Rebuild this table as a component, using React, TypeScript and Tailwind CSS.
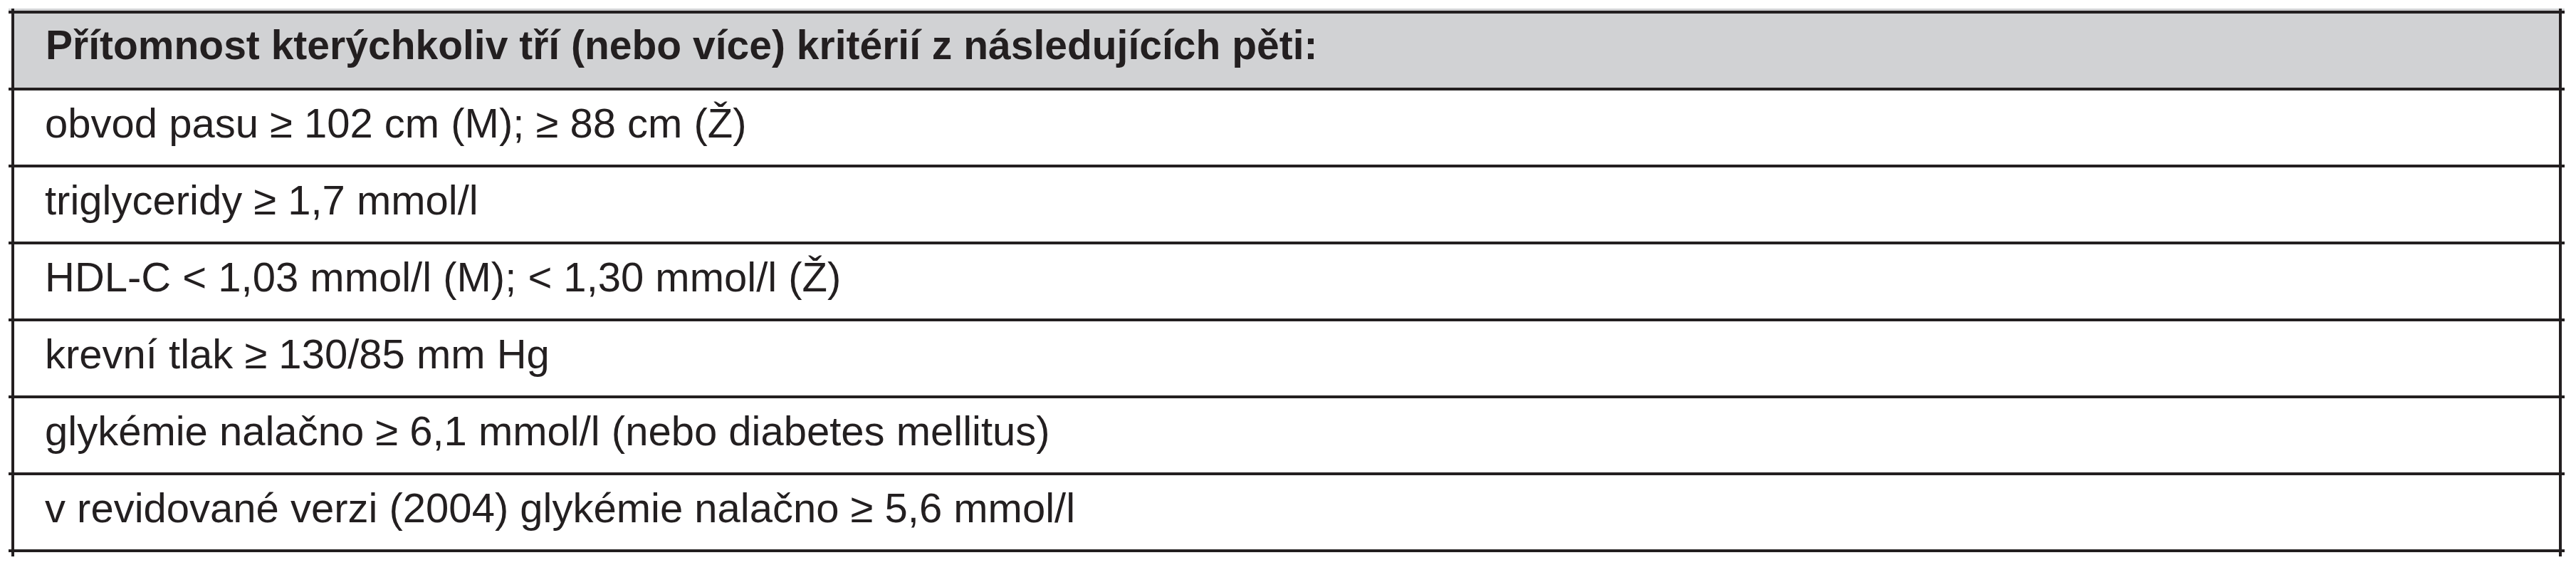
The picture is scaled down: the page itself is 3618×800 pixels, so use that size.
const criteria = [
  'obvod pasu ≥ 102 cm (M); ≥ 88 cm (Ž)',
  'triglyceridy ≥ 1,7 mmol/l',
  'HDL-C < 1,03 mmol/l (M); < 1,30 mmol/l (Ž)',
  'krevní tlak ≥ 130/85 mm Hg',
  'glykémie nalačno ≥ 6,1 mmol/l (nebo diabetes mellitus)',
  'v revidované verzi (2004) glykémie nalačno ≥ 5,6 mmol/l',
];

function Rule() {
  return <div className="h-[4px] bg-[#231f20]" />;
}

function Ticks({ gray }: { gray?: boolean }) {
  return (
    <div className={`flex justify-between px-[4px] ${gray ? 'h-[3px] bg-[#d1d2d4]' : 'h-[6px]'}`}>
      <div className="w-[4px] bg-[#231f20]" />
      <div className="w-[4px] bg-[#231f20]" />
    </div>
  );
}

export default function App() {
  return (
    <div className="w-[3618px] h-[800px] bg-white pt-[12px] pl-[12px] font-['Liberation_Sans',Arial,sans-serif] text-[#231f20]">
      <div className="w-[3590px]">
        <Ticks gray />
        <Rule />
        {/* header */}
        <div className="mx-[4px] h-[104px] border-x-4 border-[#231f20] bg-[#d1d2d4] pl-[44px] pt-[12px] text-[57px] font-bold leading-[64px]">
          Přítomnost kterýchkoliv tří (nebo více) kritérií z následujících pěti:
        </div>
        <Rule />
        {criteria.map((c) => (
          <div key={c}>
            <div className="mx-[4px] h-[104px] border-x-4 border-[#231f20] pl-[43px] pt-[14px] text-[58px] leading-[64px]">
              {c}
            </div>
            <Rule />
          </div>
        ))}
        <Ticks />
      </div>
    </div>
  );
}
